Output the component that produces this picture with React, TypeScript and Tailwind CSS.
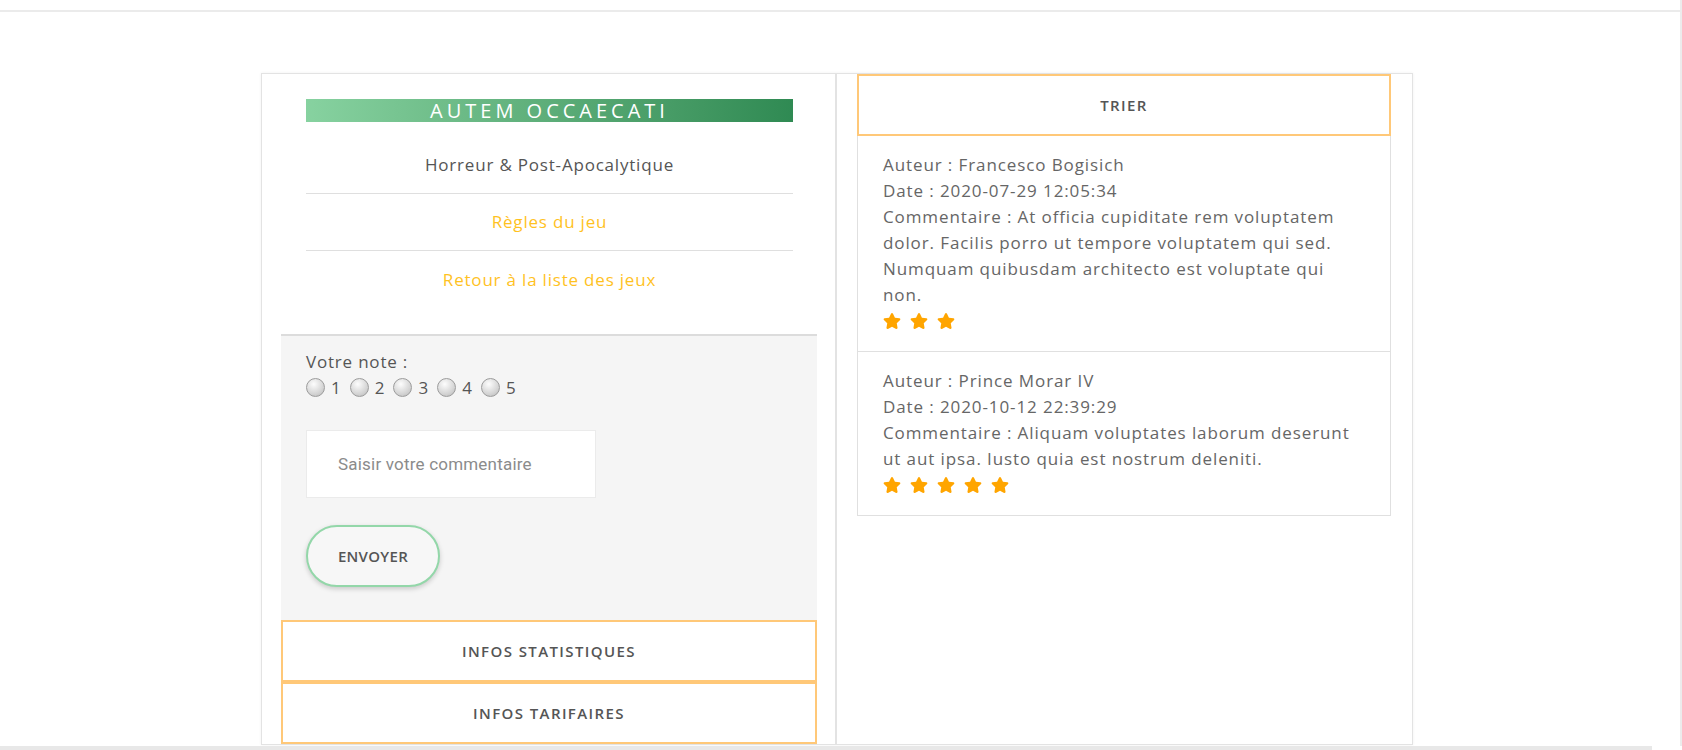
import React from "react";
import { FaStar } from "react-icons/fa";

const comments = [
  {
    author: "Francesco Bogisich",
    date: "2020-07-29 12:05:34",
    text: "At officia cupiditate rem voluptatem dolor. Facilis porro ut tempore voluptatem qui sed. Numquam quibusdam architecto est voluptate qui non.",
    note: 3,
  },
  {
    author: "Prince Morar IV",
    date: "2020-10-12 22:39:29",
    text: "Aliquam voluptates laborum deserunt ut aut ipsa. Iusto quia est nostrum deleniti.",
    note: 5,
  },
];

function Radio({ value }: { value: number }) {
  return (
    <label className="flex items-end mr-[9px]">
      <span className="w-[19px] h-[19px] rounded-full border border-[#9c9c9c] bg-[radial-gradient(circle_at_40%_30%,#fdfdfd,#d2d2d2_65%,#b5b5b5)] mb-[1px]" />
      <span className="ml-[6px] text-[17px] leading-5 text-[#555]">{value}</span>
    </label>
  );
}

export default function App() {
  return (
    <div className="h-[750px] flex flex-col bg-white overflow-hidden font-['Open_Sans',sans-serif]">
      <div className="flex-1 min-h-0 flex flex-col border-r-2 border-[#ececec]">
        {/* Header */}
        <header className="h-[12px] shrink-0 border-b-2 border-[#ebebeb]" />

        {/* Main */}
        <main className="flex-1 min-h-0 pt-[61px] pl-[261px]">
          <div className="w-[1152px] flex border border-[#e3e3e3] shadow-[0_0_3px_rgba(0,0,0,0.06)]">
            {/* Left column */}
            <div className="w-[575px] shrink-0 border-r-2 border-[#e3e3e3]">
              <div className="pl-[44px] pr-[42px] pt-[25px] pb-[26px]">
                <h1 className="h-[23px] bg-linear-to-r from-[#87d2a0] to-[#2f8a53] text-center text-white text-[20px] leading-[23px] tracking-[4px]">
                  AUTEM OCCAECATI
                </h1>
                <ul className="mt-[15px] text-[17px] tracking-[0.8px]">
                  <li className="h-[57px] flex items-center justify-center border-b border-[#dfdfdf] text-[#555]">
                    Horreur &amp; Post-Apocalytique
                  </li>
                  <li className="h-[57px] flex items-center justify-center border-b border-[#dfdfdf]">
                    <a className="text-[#ffc21f]">Règles du jeu</a>
                  </li>
                  <li className="h-[57px] flex items-center justify-center">
                    <a className="text-[#ffc21f]">Retour à la liste des jeux</a>
                  </li>
                </ul>
              </div>

              {/* Note form */}
              <div className="ml-[19px] mr-[18px] bg-[#f5f5f5] border-t-2 border-[#dcdcdc] pl-[25px] pt-[14px] pb-[33px]">
                <p className="text-[17px] leading-6 tracking-[0.8px] text-[#555]">Votre note :</p>
                <div className="h-6 flex items-end">
                  {[1, 2, 3, 4, 5].map((n) => (
                    <Radio key={n} value={n} />
                  ))}
                </div>
                <input
                  className="mt-[32px] block w-[290px] h-[68px] bg-white border border-[#ebebeb] px-[31px] text-[17px] tracking-[0.2px] font-['Roboto',sans-serif] placeholder:text-[#8b8b8b] outline-none"
                  placeholder="Saisir votre commentaire"
                />
                <button className="mt-[27px] block w-[134px] h-[62px] rounded-full border-2 border-[#93d7a9] bg-[#f7f7f7] shadow-[0_2px_5px_rgba(0,0,0,0.18)] text-[15px] font-semibold tracking-[0.3px] text-[#555]">
                  ENVOYER
                </button>
              </div>

              <div className="ml-[19px] mr-[18px] h-[62px] border-2 border-[#ffc878] flex items-center justify-center text-[15px] font-semibold tracking-[1.4px] text-[#555]">
                INFOS STATISTIQUES
              </div>
              <div className="ml-[19px] mr-[18px] h-[62px] border-2 border-[#ffc878] flex items-center justify-center text-[15px] font-semibold tracking-[1.4px] text-[#555]">
                INFOS TARIFAIRES
              </div>
            </div>

            {/* Right column */}
            <div className="flex-1 pl-[20px] pr-[21px]">
              <div className="h-[62px] border-2 border-[#ffc878] flex items-center justify-center text-[15px] font-semibold tracking-[1.4px] text-[#555]">
                TRIER
              </div>
              {comments.map((c, i) => (
                <div
                  key={i}
                  className="border border-t-0 border-[#e0e0e0] pl-[25px] pr-[32px] pt-4 pb-[17px] text-[17px] leading-[26px] tracking-[0.9px] text-[#666]"
                >
                  <p>Auteur : {c.author}</p>
                  <p>Date : {c.date}</p>
                  <p>Commentaire : {c.text}</p>
                  <div className="h-[26px] flex items-center gap-[9px] text-[#ffa500]">
                    {Array.from({ length: c.note }).map((_, k) => (
                      <FaStar key={k} size={18} />
                    ))}
                  </div>
                </div>
              ))}
            </div>
          </div>
        </main>
      </div>
      <div className="h-[4px] w-[1652px] shrink-0 bg-[#e8e8e8]" />
    </div>
  );
}
